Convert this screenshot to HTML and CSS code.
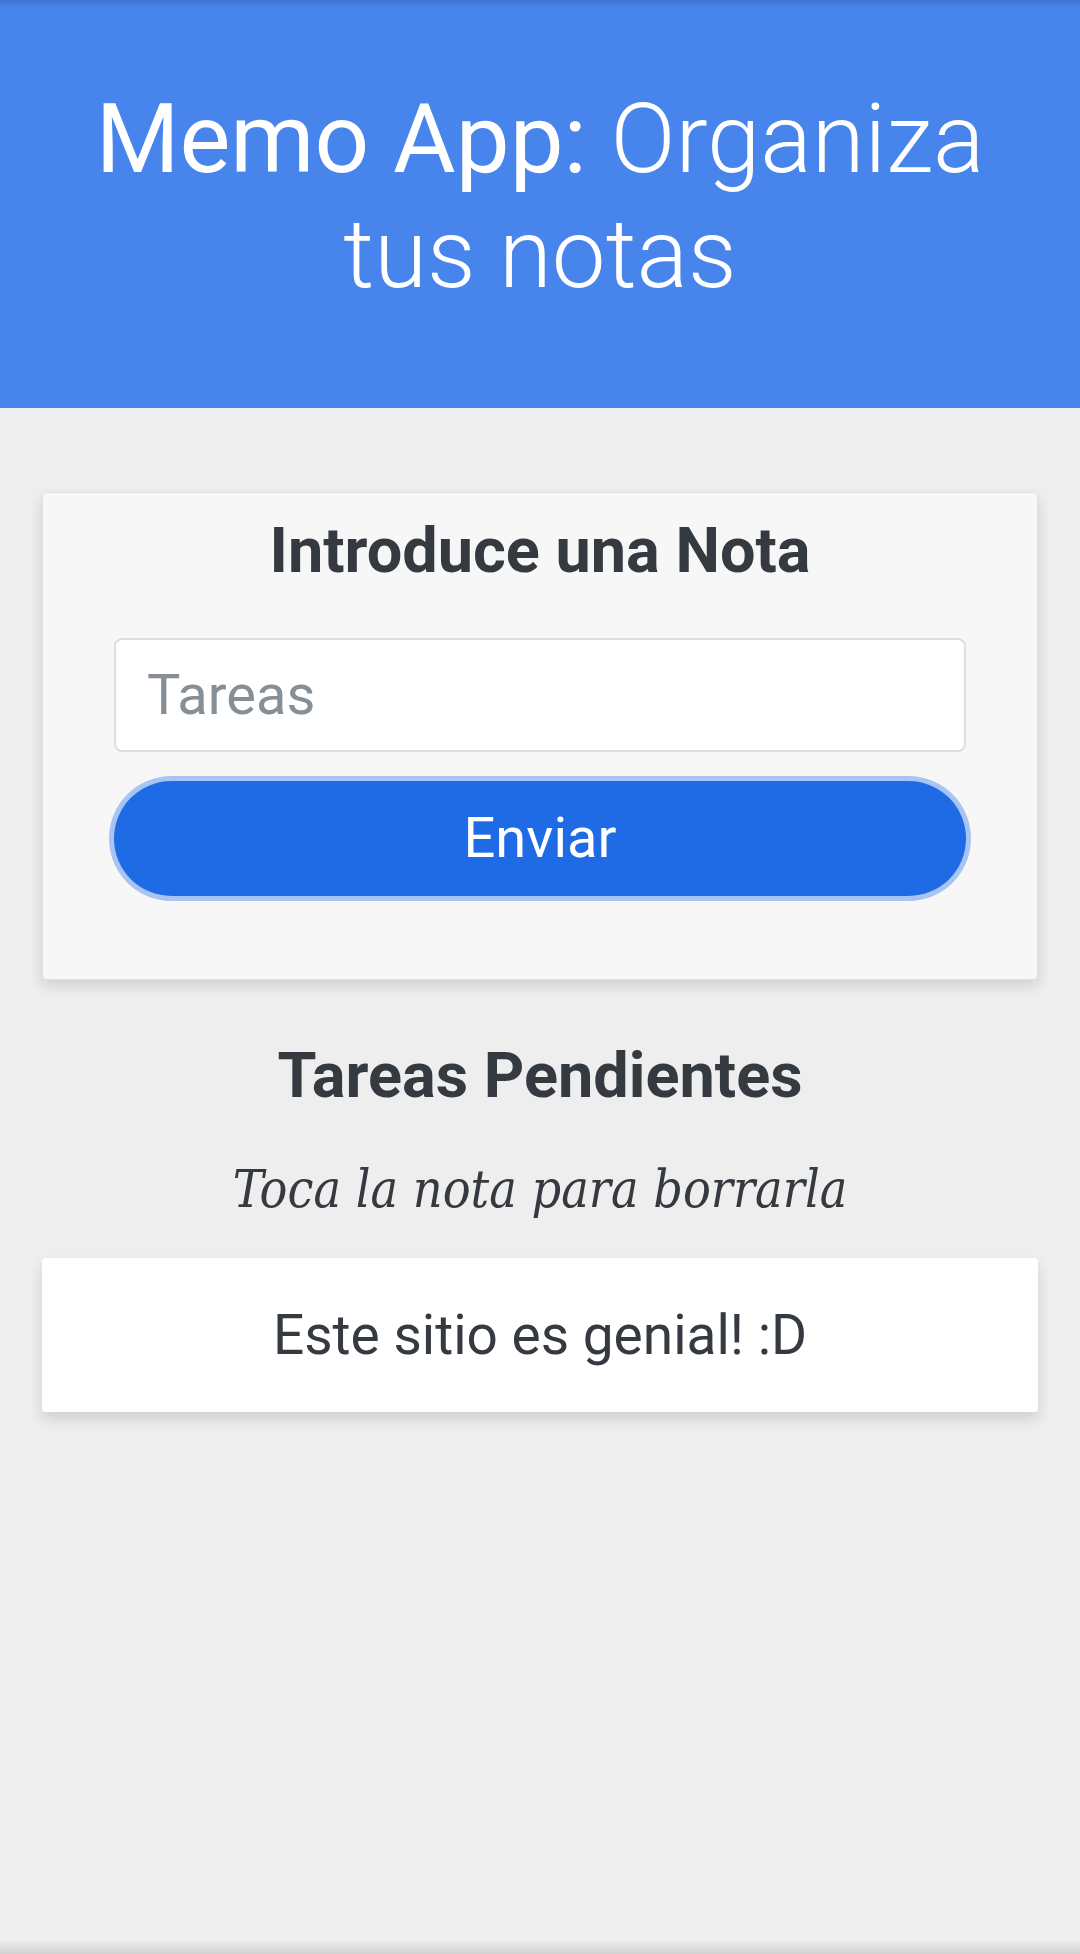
FILE: index.html
```html
<!DOCTYPE html>
<html lang="es">
<head>
<meta charset="utf-8">
<title>Memo App</title>
<link rel="stylesheet" href="styles.css">
</head>
<body>
<header class="hero">
  <h1 class="hero-title">Memo App: <span class="light">Organiza tus notas</span></h1>
</header>
<main class="content">
  <section class="form-card">
    <h2 class="section-title">Introduce una Nota</h2>
    <form class="note-form">
      <input class="note-input" type="text" placeholder="Tareas">
      <button class="send-btn" type="button">Enviar</button>
    </form>
  </section>
  <h2 class="section-title pending">Tareas Pendientes</h2>
  <p class="hint">Toca la nota para borrarla</p>
  <div class="note">Este sitio es genial! :D</div>
</main>
<div class="nav-shadow"></div>
</body>
</html>
```
FILE: styles.css
```css
* { box-sizing: border-box; }
html, body { margin: 0; padding: 0; }
body {
  background: #eeeeee;
  font-family: Roboto, "Liberation Sans", sans-serif;
  color: #343a40;
  min-height: 1954px;
  position: relative;
}
.hero {
  background: #4784eb;
  height: 408px;
  padding: 82px 60px 0;
  text-align: center;
  box-shadow: inset 0 7px 6px -5px rgba(0,0,0,0.18);
}
.hero-title {
  margin: 0;
  color: #fff;
  font-size: 96px;
  font-weight: 400;
  line-height: 1.2;
}
.hero-title .light { font-weight: 300; }
.content {
  padding: 84px 42px 0;
}
.form-card {
  background: #f7f7f7;
  border: 1px solid #e0e0e0;
  border-radius: 4px;
  box-shadow: 0 6px 14px rgba(0,0,0,0.13);
  padding: 20px 71px 83px;
  height: 488px;
}
.section-title {
  margin: 0;
  text-align: center;
  font-size: 63px;
  font-weight: 700;
  line-height: 1.2;
  color: #343a40;
}
.note-form {
  display: flex;
  flex-direction: column;
  margin-top: 49px;
}
.note-input {
  height: 114px;
  width: 100%;
  border: 2px solid #dedede;
  border-radius: 8px;
  background: #fff;
  padding: 0 31px;
  font-family: Roboto, "Liberation Sans", sans-serif;
  font-size: 56px;
  color: #343a40;
  outline: none;
}
.note-input::placeholder { color: #868e96; }
.send-btn {
  margin-top: 29px;
  height: 115px;
  width: 100%;
  border: none;
  border-radius: 58px;
  background: #1f6be6;
  color: #fff;
  font-family: Roboto, "Liberation Sans", sans-serif;
  font-size: 56px;
  box-shadow: 0 0 0 5px #a8c4f2;
  padding: 0;
}
.pending { margin-top: 58px; }
.hint {
  margin: 43px 0 0;
  text-align: center;
  font-family: "DejaVu Serif Condensed", "DejaVu Serif", serif;
  font-stretch: condensed;
  font-style: italic;
  font-size: 51.5px;
  line-height: 65px;
  color: #343a40;
}
.note {
  margin-top: 36px;
  height: 154px;
  background: #fff;
  border-radius: 4px;
  box-shadow: 0 7px 14px rgba(0,0,0,0.13);
  display: flex;
  align-items: center;
  justify-content: center;
  font-size: 55px;
  color: #343a40;
}
.nav-shadow {
  position: absolute;
  left: 0; right: 0; bottom: 0;
  height: 14px;
  background: linear-gradient(to bottom, rgba(0,0,0,0), rgba(0,0,0,0.12));
}
```
